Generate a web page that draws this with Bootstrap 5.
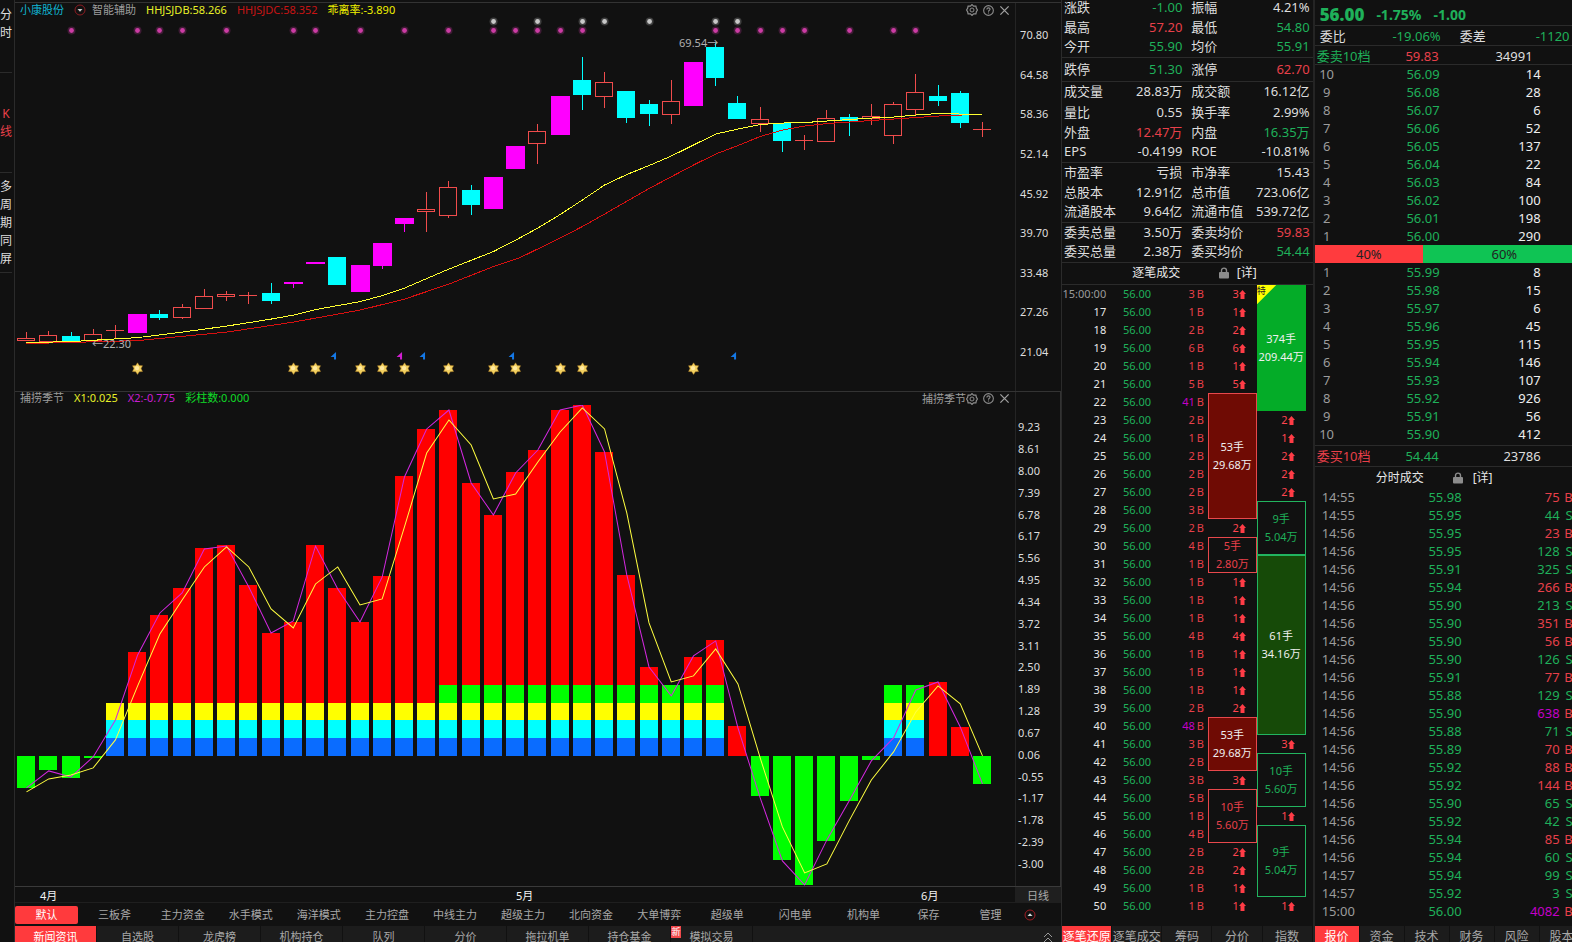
<!DOCTYPE html>
<html lang="zh-CN" data-bs-theme="dark">
<head>
<meta charset="utf-8">
<meta name="viewport" content="width=device-width, initial-scale=1">
<title>小康股份</title>
<link href="https://cdn.jsdelivr.net/npm/bootstrap@5.3.0/dist/css/bootstrap.min.css" rel="stylesheet">
<style>
  :root{--bg:#111;--line:#2b2b2b;--up:#e8404a;--down:#1fb05a;--big:#c400c8;--dim:#9c9c9c;--txt:#dedede;--hot:#ff3a3d}
  body{background:var(--bg);color:var(--txt);font:11px/18px "Noto Sans","Noto Sans CJK SC",sans-serif;overflow:hidden}
  button{background:none;border:0;padding:0;color:inherit;font:inherit;white-space:nowrap}
  table{border-collapse:collapse;table-layout:fixed}
  td,th{padding:0;font-weight:400;white-space:nowrap}
  svg{display:block}
  .up{color:var(--up)} .down{color:var(--down)} .big{color:var(--big)} .dim{color:var(--dim)}
  .line-b{border-bottom:1px solid var(--line)}
  .side{width:15px;border-right:1px solid var(--line)}
  .side button{height:100px;width:12px;font-size:12px;white-space:normal;word-break:break-all;border-bottom:1px solid var(--line)}
  .side button:first-child{height:73px;padding-bottom:24px}
  .main-top{padding-top:2px}
  .pane{border-top:1px solid #333;min-height:0}
  .pane-price{flex:389 1 0}
  .pane-wave{flex:495 1 0;border-right:1px solid #333}
  .pane-head{height:14px;line-height:14px;padding:0 5px;gap:10px}
  .pane-wave .pane-head{height:13px;line-height:12px}
  .stock{gap:6px}
  .tools{gap:5px}
  .plot{min-height:0}
  .plot svg{width:100%;height:100%}
  .plot .tag{position:absolute;color:#b0b0b0}
  .axis{width:46px;border-left:1px solid #242424}
  .pane-wave .axis{width:45px}
  .pane-price .axis{padding:23px 0 30px 4px}
  .pane-wave .axis{padding:26px 0 13px 2px}
  .months{height:16px;line-height:17px;border-top:1px solid #3a3a3a}
  .months .scale{display:grid;grid-template-columns:25fr 476fr 405fr 94fr;color:#f4f4f4}
  .months .period{width:46px;background:#1f1f1f;color:#aaa}
  .modes{height:24px;padding-top:3px;border-top:1px solid #1f1f1f;display:grid;gap:5px;grid-template-columns:repeat(13,63fr) 57fr 57fr 14fr 18fr;color:#a8a8a8}
  .modes button{height:18px;line-height:16px}
  .modes .on{background:var(--hot);color:#fff;border-radius:2px}
  .foot{height:16px;background:#1c1c1c;overflow:hidden;color:#a8a8a8}
  .foot button{height:22px;line-height:22px;border-right:1px solid #111;flex:none}
  .foot .on{background:var(--hot);color:#fff}
  .foot-main button{width:82px}
  .new-mark{position:absolute;left:0;top:0;width:10px;height:12px;font-size:9px;line-height:12px;background:#f0484c;color:#fff}
  .foot-mid button{flex:1 1 0;font-size:12px}
  .foot-right button{width:45px;font-size:12px}
  .mid{width:16%;border-left:1px solid var(--line)}
  .right{width:16.5%;border-left:2px solid #242424}
  .quote{font-size:13px;margin-top:-3px}
  .quote tr{height:20px;line-height:19px}
  .quote .gap-a{height:24px} .quote .gap-b{height:21px}
  .quote th{padding-left:2px}
  .quote th+td+th{padding-left:9px}
  .quote td{text-align:right}
  .quote td:last-child{padding-right:3px}
  .sec-title{height:22px;font-size:12px;padding-left:28%;color:#e8e8e8}
  .right .sec-title{height:21px;padding-left:61px}
  .right .sec-title svg{margin:0 10px 0 29px}
  .deals td,.deals th{height:18px;text-align:right}
  .deals th{color:#e8e8e8;padding-right:1px}
  .deals th.dim{color:var(--dim)}
  .deals .qty{padding-right:4px}
  .deals .flag{margin-left:2px}
  .deals .hit{padding-right:11px;color:#ff4550}
  .deals .hit svg{display:inline-block;vertical-align:-1px}
  .deals .box{text-align:center;vertical-align:middle;color:#f0f0f0;position:relative}
  .box-r{box-shadow:inset 0 0 0 1px #e8484c} .box-g{box-shadow:inset 0 0 0 1px #22b45f}
  .deals .hollow.box-r{color:var(--up)} .deals .hollow.box-g{color:var(--down)}
  .fill-r{background:#6f0b04} .fill-g{background:#164a08} .fill-hot{background:#04ac28;box-shadow:none}
  .corner{position:absolute;left:0;top:0;width:20px;height:20px;background:#ff0;clip-path:polygon(0 0,100% 0,0 100%);color:#222;font-size:9px;line-height:12px;text-align:left}
  .wide{width:271px;font-size:13px}
  .last{height:26px;padding:4px 0 0 5px;font-size:14px;font-weight:700}
  .last b{font-size:17px}
  .sum{display:grid;grid-template-columns:124px 102px 45px;padding-top:1px}
  .sum span:first-child{padding-left:2px}
  .sum-ask{height:19px}
  .sum-bid{height:22px;margin-top:2px;border-top:1px solid var(--line)}
  .balance{height:20px;line-height:21px;display:grid;grid-template-columns:126px 95px 50px}
  .balance div{padding-left:5px}
  .balance .diff{padding-left:19px}
  .book td,.book th,.ticks td,.ticks th{height:18px;text-align:right}
  .book th{text-align:center;color:var(--dim)}
  .book td:last-child{padding-right:45px;color:#eee}
  .meter{height:18px;color:#222;text-align:center}
  .ticks th{text-align:left;padding-left:7px;color:var(--dim)}
  .ticks td:last-child{padding-right:13px}
</style>
</head>
<body>
<svg class="d-none">
  <symbol id="gear" viewBox="0 0 12 12"><path d="M6 .6 7.600 2.200h2.300l.5 2.200L11.500 6l-1.100 1.600-.5 2.200H7.600L6 11.400 4.400 9.800H2.100l-.5-2.200L.5 6l1.100-1.600.5-2.200h2.300z" fill="none" stroke="#8c8c8c" stroke-width="1.200"/><circle cx="6" cy="6" r="2" fill="none" stroke="#8c8c8c"/></symbol>
  <symbol id="help" viewBox="0 0 12 12"><circle cx="6" cy="6" r="5.300" fill="none" stroke="#8c8c8c" stroke-width="1.200"/><path d="M4.200 4.900C4.200 2.500 7.800 2.600 7.700 4.700 7.600 5.900 6 5.700 6 7.300M6 8.200v1.200" fill="none" stroke="#8c8c8c" stroke-width="1.200"/></symbol>
  <symbol id="close" viewBox="0 0 12 12"><path d="m1.500 1.500 9 9m0-9-9 9" stroke="#a0a0a0" stroke-width="1.400"/></symbol>
  <symbol id="lock" viewBox="0 0 10 12"><path d="M2.500 6V3.600a2.500 2.500 0 0 1 5 0V6" fill="none" stroke="#8c8c8c" stroke-width="1.400"/><rect y="5" width="10" height="6.500" rx="1" fill="#8c8c8c"/></symbol>
</svg>

<div class="d-flex vh-100">
  <nav class="side d-flex flex-column flex-shrink-0 text-center" aria-label="视图">
    <button type="button">分时</button>
    <button type="button" class="up">K线</button>
    <button type="button">多周期同屏</button>
  </nav>

  <main class="main-top d-flex flex-column flex-grow-1 overflow-hidden">
    <section class="pane pane-price d-flex">
      <div class="d-flex flex-column flex-grow-1">
        <header class="pane-head d-flex">
          <span style="color:#10b4d0">小康股份</span>
          <span class="stock d-flex">
            <button type="button" class="d-flex align-items-center" aria-label="菜单"><svg width="12" height="12" viewBox="0 0 12 12"><circle cx="6" cy="6" r="5" fill="none" stroke="#8c1c22"/><path d="M3.500 5h5L6 7.800z" fill="#ccc"/></svg></button>
            <span class="dim">智能辅助</span>
          </span>
          <span style="color:#e8f028">HHJSJDB:58.266</span>
          <span style="color:#c81414">HHJSJDC:58.352</span>
          <span style="color:#f0f000">乖离率:-3.890</span>
          <span class="tools d-flex align-items-center ms-auto">
            <button type="button" aria-label="设置"><svg width="12" height="12"><use href="#gear"/></svg></button>
            <button type="button" aria-label="帮助"><svg width="11" height="11"><use href="#help"/></svg></button>
            <button type="button" aria-label="关闭"><svg width="11" height="11"><use href="#close"/></svg></button>
          </span>
        </header>
        <div class="plot position-relative flex-grow-1">
          <svg id="price" viewBox="15 17 1000 374" preserveAspectRatio="none" shape-rendering="crispEdges"></svg>
          <span class="tag" style="left:66.4%;top:4.5%">69.54→</span>
          <span class="tag" style="left:7.7%;top:85%">←22.30</span>
        </div>
      </div>
      <div class="axis d-flex flex-column justify-content-between flex-shrink-0" id="axis1"></div>
    </section>

    <section class="pane pane-wave d-flex">
      <div class="d-flex flex-column flex-grow-1">
        <header class="pane-head d-flex">
          <span class="dim">捕捞季节</span>
          <span style="color:#e8f028">X1:0.025</span>
          <span style="color:#c81ed2">X2:-0.775</span>
          <span style="color:#10dc28">彩柱数:0.000</span>
          <span class="tools d-flex align-items-center ms-auto">
            <span class="d-flex align-items-center dim">捕捞季节<button type="button" aria-label="设置"><svg width="12" height="12"><use href="#gear"/></svg></button></span>
            <button type="button" aria-label="帮助"><svg width="11" height="11"><use href="#help"/></svg></button>
            <button type="button" aria-label="关闭"><svg width="11" height="11"><use href="#close"/></svg></button>
          </span>
        </header>
        <div class="plot flex-grow-1">
          <svg id="wave" viewBox="15 405 1000 481" preserveAspectRatio="none" shape-rendering="crispEdges"></svg>
        </div>
      </div>
      <div class="axis d-flex flex-column justify-content-between flex-shrink-0" id="axis2"></div>
    </section>

    <div class="months d-flex flex-shrink-0">
      <div class="scale flex-grow-1"><i></i><span>4月</span><span>5月</span><span>6月</span></div>
      <div class="period text-center">日线</div>
    </div>
    <nav class="modes flex-shrink-0" id="modes" aria-label="指标模板"></nav>
    <nav class="foot foot-main d-flex flex-shrink-0" aria-label="资讯">
      <button type="button" class="on">新闻资讯</button>
      <button type="button">自选股</button>
      <button type="button">龙虎榜</button>
      <button type="button">机构持仓</button>
      <button type="button">队列</button>
      <button type="button">分价</button>
      <button type="button">拖拉机单</button>
      <button type="button">持仓基金</button>
      <button type="button" class="position-relative"><span class="new-mark">新</span>模拟交易</button>
      <button type="button" class="ms-auto w-auto border-0 pe-2" aria-label="展开"><svg width="10" height="12" viewBox="0 0 10 12" fill="none" stroke="#999"><path d="m1 6 4-4 4 4M1 11l4-4 4 4"/></svg></button>
    </nav>
  </main>

  <section class="mid d-flex flex-column flex-shrink-0 overflow-hidden">
    <table class="quote w-100">
      <colgroup><col style="width:22.5%"><col style="width:25.5%"><col style="width:25.5%"><col style="width:26.5%"></colgroup>
      <tbody id="quote"></tbody>
    </table>
    <div class="sec-title line-b d-flex align-items-center flex-shrink-0">
      <span>逐笔成交</span><svg class="ms-auto me-2" width="10" height="12"><use href="#lock"/></svg><a href="#" class="text-reset text-decoration-none me-5 pe-2">[详]</a>
    </div>
    <table class="deals w-100">
      <colgroup><col style="width:18%"><col style="width:17.5%"><col style="width:22.7%"><col style="width:19.5%"><col style="width:19.5%"><col></colgroup>
      <tbody id="deals"></tbody>
    </table>
    <nav class="foot foot-mid d-flex mt-auto flex-shrink-0" aria-label="成交视图">
      <button type="button" class="on">逐笔还原</button>
      <button type="button">逐笔成交</button>
      <button type="button">筹码</button>
      <button type="button">分价</button>
      <button type="button">指数</button>
    </nav>
  </section>

  <section class="right d-flex flex-column flex-shrink-0 overflow-hidden">
    <div class="wide">
      <div class="last line-b down d-flex align-items-center"><b class="me-2 pe-1">56.00</b><span class="me-2 pe-1">-1.75%</span><span>-1.00</span></div>
      <div class="balance line-b">
        <div class="d-flex justify-content-between"><span>委比</span><span class="down">-19.06%</span></div>
        <span class="diff">委差</span><span class="down">-1120</span>
      </div>
      <div class="sum sum-ask line-b">
        <div class="d-flex justify-content-between down"><span>委卖10档</span><span class="up">59.83</span></div>
        <span class="text-end pe-2">34991</span>
      </div>
      <table class="book w-100"><colgroup><col style="width:24px"><col style="width:101px"><col></colgroup><tbody id="asks"></tbody></table>
      <div class="meter d-flex"><div style="width:40%;background:#ff3b3e">40%</div><div style="width:60%;background:#0fc454">60%</div></div>
      <table class="book w-100"><colgroup><col style="width:24px"><col style="width:101px"><col></colgroup><tbody id="bids"></tbody></table>
      <div class="sum sum-bid line-b">
        <div class="d-flex justify-content-between up"><span>委买10档</span><span class="down">54.44</span></div>
        <span class="text-end">23786</span>
      </div>
      <div class="sec-title d-flex align-items-center">
        <span>分时成交</span><svg width="10" height="12"><use href="#lock"/></svg><a href="#" class="text-reset text-decoration-none">[详]</a>
      </div>
      <table class="ticks w-100"><colgroup><col style="width:60px"><col style="width:87px"><col style="width:98px"><col></colgroup><tbody id="ticks"></tbody></table>
    </div>
    <nav class="foot foot-right d-flex mt-auto flex-shrink-0" aria-label="报价视图">
      <button type="button" class="on">报价</button>
      <button type="button">资金</button>
      <button type="button">技术</button>
      <button type="button">财务</button>
      <button type="button">风险</button>
      <button type="button">股本</button>
    </nav>
  </section>
</div>

<script src="https://cdn.jsdelivr.net/npm/bootstrap@5.3.0/dist/js/bootstrap.bundle.min.js"></script>
<script>
const $ = id => document.getElementById(id);
const STEP = 22.23;
const cx = i => Math.round(26.1 + STEP * i);
const rect = (x, y, w, h, f) => `<rect x="${x}" y="${y}" width="${w}" height="${h}" fill="${f}"/>`;
const poly = (pts, c) => `<polyline points="${pts.map(p => p.join()).join(' ')}" fill="none" stroke="${c}"/>`;

/* Candles: kind (r hollow, c cyan, m magenta, x cross), body top, body bottom, wick top, wick bottom */
const candles = `r 338 341 332 341|r 335 342 331 342|c 336 342 332 342|r 334 341 329 341|x 330 330 325 339|m 314 333|c 314 318 310 320|r 307 318 304 319|r 296 309 289 309|r 294 297 291 301|x 295 295 292 304|c 293 301 283 304|m 282 284 282 288|m 262 264|c 257 285|m 265 292|m 243 266 243 269|m 218 224 218 232|r 209 212 192 232|r 187 216 181 218|c 190 205 185 215|m 177 209|m 146 169|r 131 144 124 164|m 96 135|c 80 95 57 110|r 82 97 72 108|c 91 118 91 123|c 104 114 100 126|r 101 115 80 124|m 62 106|c 47 78 43 86|c 103 119 96 119|r 119 124 107 132|c 123 141 123 152|x 140 140 135 150|r 118 142 110 142|c 117 121 114 136|r 116 119 104 125|r 104 136 102 144|r 92 110 74 115|c 96 101 85 106|c 93 123 91 128|x 129 129 122 137`.split('|').map(s => s.split(' '));
let s = '';
candles.forEach(([k, a, b, t, u], i) => {
  a = +a; b = +b; t = +(t || a); u = +(u || b);
  const x = cx(i), col = {r:'#f04c4c', x:'#f04c4c', c:'#0ff', m:'#f0f'}[k];
  if (t < a) s += rect(x, t, 1, a - t, col);
  if (u > b) s += rect(x, b, 1, u - b, col);
  if (k === 'x') s += rect(x - 9, a, 18, 1, col);
  else if (k === 'r') s += `<rect x="${x - 8.5}" y="${a + .5}" width="17" height="${b - a - 1}" fill="none" stroke="${col}"/>`;
  else s += rect(x - 9, a, k === 'm' ? 19 : 18, b - a, col);
});
const path = o => Object.entries(o).sort((a, b) => a[0] - b[0]).map(([i, y]) => [26.5 + STEP * i, y]);
s += poly(path({0:343.5,5:340.5,9:332,12:322,15:310,17:299,19:284,21:266.5,22.2:257.5,24:238,25:226.5,26:214,28:188.5,30:165,31:154,32:145.5,33:136.5,34:130,35:126,36:123.5,37:122,39:119,41:116,42:115,43:114.5}), '#d81010');
s += poly(path({0:342.5,2:341.5,5:337.5,7:332,9:326,11:319,12:315,13:309.5,15:301.5,16:295.5,17:288,19:269,21:251.5,22.2:237.7,23:228,24:214.5,25:200,26:185,27:174.5,28:165.5,29:156,30:145,31:134,32:129,33:124.5,34:123,35:122.5,36:121,38:118,39:117,40:115,41:113.5,42:114,43:115}), '#ffff30');
const dot = (i, y, c) => `<circle cx="${cx(i) + .5}" cy="${y}" r="4" fill="${c}" opacity=".25"/><circle cx="${cx(i) + .5}" cy="${y}" r="2.4" fill="${c}"/>`;
s += '<g shape-rendering="auto">';
[2,5,6,7,9,12,13,15,17,19,21,22,23,24,25,31,32,33,34,35,37,39,40].forEach(i => s += dot(i, 30.5, '#cc3ca4'));
[21,23,25,26,28,31,32].forEach(i => s += dot(i, 21.5, '#c8c8c8'));
[5,12,13,15,16,17,19,21,22,24,25,30].forEach(i => {
  let p = [];
  for (let k = 0; k < 12; k++) { const r = k % 2 ? 3.6 : 5.8, a = Math.PI * k / 6; p.push((cx(i) + .5 + r * Math.sin(a)).toFixed(1) + ',' + (368.5 - r * Math.cos(a)).toFixed(1)); }
  s += `<polygon points="${p.join(' ')}" fill="#f2d060" stroke="#a87820" stroke-width=".5"/><circle cx="${cx(i)}" cy="368" r="2.2" fill="#ffe9a0"/>`;
});
[[334,'#1478e6'],[400,'#d21ed2'],[423,'#1478e6'],[512,'#1478e6'],[734,'#1478e6']].forEach(([x, c]) => s += `<path d="M${x + 2} 352v7.500h-2v-2.500h-3.500z" fill="${c}"/>`);
$('price').innerHTML = s + '</g>';

/* Wave histogram: far end of each bar; the zero line is at 756 */
const ends = [788,770,778,758,703,652,615,588,548,545,585,633,622,545,588,622,576,476,429,410,483,515,472,450,410,405,452,575,667,685,657,640,726,796,860,885,841,801,760,685,685,682,727,784];
s = '';
ends.forEach((e, i) => {
  const x = cx(i) - 9;
  if (e > 756) { s += rect(x, 756, 18, e - 756, '#0f0'); return; }
  s += rect(x, e, 18, 756 - e, '#f00');
  if (i >= 4 && i <= 31 || i === 39 || i === 40) {
    if (i >= 19) s += rect(x, 685, 18, 18, '#0f0');
    s += rect(x, 703, 18, 17, '#ff0') + rect(x, 720, 18, 18, '#0ff') + rect(x, 738, 18, 18, '#0a6cff');
  }
});
const x2 = [788,771,777,757,720,655,613,593,549,546,587,633,621,546,589,622,577,477,429,410,483,515,473,450,410,405,452,575,667,696,656,641,728,798,861,885,840,801,761,738,690,682,727,784];
const x1 = [792,779,775,768,740,686,634,600,567,547,567,609,628,584,567,605,599,527,453,420,445,499,494,462,432,408,429,513,623,682,676,649,684,758,827,873,864,821,780,752,712,686,704,756];
s += poly(x2.map((y, i) => [26.5 + STEP * i, y]), '#d428e0') + poly(x1.map((y, i) => [26.5 + STEP * i, y]), '#ffff40');
$('wave').innerHTML = s;

const spans = t => t.split(' ').map(v => `<span>${v}</span>`).join('');
$('axis1').innerHTML = spans('70.80 64.58 58.36 52.14 45.92 39.70 33.48 27.26 21.04');
$('axis2').innerHTML = spans('9.23 8.61 8.00 7.39 6.78 6.17 5.56 4.95 4.34 3.72 3.11 2.50 1.89 1.28 0.67 0.06 -0.55 -1.17 -1.78 -2.39 -3.00');
$('modes').innerHTML = '默认 三板斧 主力资金 水手模式 海洋模式 主力控盘 中线主力 超级主力 北向资金 大单博弈 超级单 闪电单 机构单 保存 管理'.split(' ').map((t, i) => `<button type="button"${i ? '' : ' class="on"'}>${t}</button>`).join('')
  + '<button type="button" aria-label="收起"><svg width="12" height="12" viewBox="0 0 12 12"><circle cx="6" cy="6" r="5" fill="none" stroke="#a01c22"/><path d="M3.500 7h5L6 4.200z" fill="#ddd"/></svg></button>';

const cls = {u:'up', d:'down', w:''};
$('quote').innerHTML = `涨跌 d-1.00 振幅 w4.21%|最高 u57.20 最低 d54.80|今开 d55.90 均价 d55.91|跌停 d51.30 涨停 u62.70|成交量 w28.83万 成交额 w16.12亿|量比 w0.55 换手率 w2.99%|外盘 u12.47万 内盘 d16.35万|EPS w-0.4199 ROE w-10.81%|市盈率 w亏损 市净率 w15.43|总股本 w12.91亿 总市值 w723.06亿|流通股本 w9.64亿 流通市值 w539.72亿|委卖总量 w3.50万 委卖均价 u59.83|委买总量 w2.38万 委买均价 d54.44`
  .split('|').map((r, i) => {
    const [a, b, c, d] = r.split(' ');
    const k = [[2,3,7,10,12].includes(i) ? 'line-b' : '', i === 3 ? 'gap-a' : '', i === 4 ? 'gap-b' : ''].join(' ').trim();
    return `<tr class="${k}"><th>${a}</th><td class="${cls[b[0]]}">${b.slice(1)}</td><th>${c}</th><td class="${cls[d[0]]}">${d.slice(1)}</td></tr>`;
  }).join('');

/* Tick-by-tick deals; merged orders span several rows */
const qty = [3,1,2,6,1,5,41,2,1,2,2,2,3,2,4,1,1,1,1,4,1,1,1,2,48,3,2,3,5,1,4,2,2,1,1];
const sellBox = {6:[7,'53手','29.68万','fill-r'], 14:[2,'5手','2.80万','hollow'], 24:[3,'53手','29.68万','fill-r'], 28:[3,'10手','5.60万','hollow']};
const buyBox = {0:[7,'374手','209.44万','fill-hot'], 12:[3,'9手','5.04万','hollow'], 15:[10,'61手','34.16万','fill-g'], 26:[3,'10手','5.60万','hollow'], 30:[4,'9手','5.04万','hollow']};
const arrow = '<svg width="7" height="9" viewBox="0 0 7 9"><path d="M3.500 0 7 4H5.500v5h-4V4H0z" fill="#ff3c46"/></svg>';
const left = {sell:0, buy:0};
function side(name, boxes, i, edge) {
  if (boxes[i]) {
    const [n, a, b, k] = boxes[i];
    left[name] = n - 1;
    return `<td class="box ${edge} ${k}" rowspan="${n}">${k === 'fill-hot' ? '<span class="corner">特</span>' : ''}${a}<br>${b}</td>`;
  }
  if (left[name] > 0) { left[name]--; return ''; }
  return `<td class="hit">${qty[i]}${arrow}</td>`;
}
$('deals').innerHTML = qty.map((q, i) =>
  `<tr><th class="${i ? '' : 'dim'}">${i ? i + 16 : '15:00:00'}</th><td class="down">56.00</td><td class="qty up"><span class="${q > 40 ? 'big' : ''}">${q}</span><span class="flag">B</span></td>${side('sell', sellBox, i, 'box-r')}${side('buy', buyBox, i, 'box-g')}<td></td></tr>`).join('');

const book = rows => rows.map(([n, p, v]) => `<tr><th>${n}</th><td class="down">${p}</td><td>${v}</td></tr>`).join('');
$('asks').innerHTML = book([14,28,6,52,137,22,84,100,198,290].map((v, i) => [10 - i, (56.09 - i / 100).toFixed(2), v]));
$('bids').innerHTML = book([8,15,6,45,115,146,107,926,56,412].map((v, i) => [i + 1, (55.99 - i / 100).toFixed(2), v]));

$('ticks').innerHTML = `55.98 75B|55.95 44S|55.95 23B|55.95 128S|55.91 325S|55.94 266B|55.90 213S|55.90 351B|55.90 56B|55.90 126S|55.91 77B|55.88 129S|55.90 638B|55.88 71S|55.89 70B|55.92 88B|55.92 144B|55.90 65S|55.92 42S|55.94 85B|55.94 60S|55.94 99S|55.92 3S|56.00 4082B`
  .split('|').map((r, i) => {
    const [p, q] = r.split(' '), n = q.slice(0, -1), f = q.slice(-1), c = f === 'B' ? 'up' : 'down';
    const t = i < 2 ? '14:55' : i < 21 ? '14:56' : i < 23 ? '14:57' : '15:00';
    return `<tr><th>${t}</th><td class="down">${p}</td><td class="${n > 600 ? 'big' : c}">${n}</td><td class="${c}">${f}</td></tr>`;
  }).join('');
</script>
</body>
</html>
